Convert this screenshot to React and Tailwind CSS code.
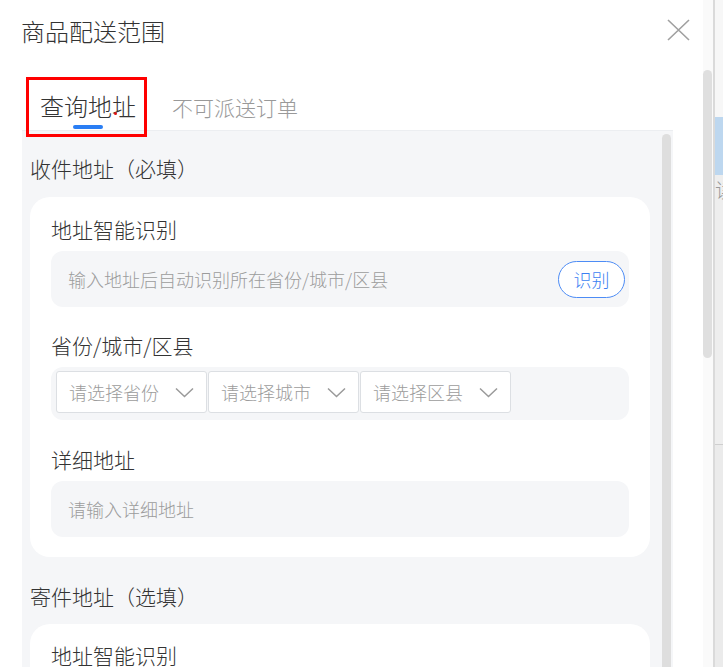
import React from "react";

const font = { fontFamily: '"Noto Sans CJK SC", "Noto Sans", sans-serif' };

function Chevron() {
  return (
    <svg width="19" height="11" viewBox="0 0 19 11" fill="none" className="shrink-0">
      <path d="M1 1.5 L9.5 9.5 L18 1.5" stroke="#9a9a9a" strokeWidth="1.5" />
    </svg>
  );
}

function Select({ label }) {
  return (
    <div className="flex h-[42px] w-[151px] items-center justify-between rounded-[3px] border border-[#dcdfe3] bg-white pl-[12px] pr-[12px]">
      <span className="text-[18px] leading-[24px] text-[#9c9c9c]">{label}</span>
      <Chevron />
    </div>
  );
}

function Label({ children, className = "" }) {
  return <div className={`text-[21px] leading-[28px] text-[#333] ${className}`}>{children}</div>;
}

function AddressCard({ first }) {
  return (
    <div className={`w-[620px] rounded-[20px] bg-white px-[21px] ${first ? "pt-[18px] pb-[20px]" : "pt-[17px] pb-[20px]"}`}>
      <Label>地址智能识别</Label>
      <div className="mt-[8px] flex h-[56px] items-center justify-between rounded-[12px] bg-[#f5f6f8] pl-[17px] pr-[4px]">
        <span className="text-[18px] leading-[24px] text-[#9c9c9c]">输入地址后自动识别所在省份/城市/区县</span>
        <button className="flex h-[37px] w-[67px] items-center justify-center rounded-full border border-[#4d8cf5] bg-white text-[18px] leading-[24px] text-[#3c7ff2]">
          识别
        </button>
      </div>
      {first && (
        <>
          <Label className="mt-[24px]">省份/城市/区县</Label>
          <div className="mt-[8px] flex gap-px rounded-[12px] bg-[#f5f6f8] pl-[5px] pt-[4px] pb-[7px]">
            <Select label="请选择省份" />
            <Select label="请选择城市" />
            <Select label="请选择区县" />
          </div>
          <Label className="mt-[25px]">详细地址</Label>
          <div className="mt-[8px] flex h-[56px] items-center rounded-[12px] bg-[#f5f6f8] pl-[17px]">
            <span className="text-[18px] leading-[24px] text-[#9c9c9c]">请输入详细地址</span>
          </div>
        </>
      )}
    </div>
  );
}

export default function App() {
  return (
    <div className="relative flex h-[667px] w-[723px] overflow-hidden bg-white font-light" style={font}>
      {/* dialog body */}
      <div className="flex w-[703px] flex-col">
        <div className="relative h-[77px] shrink-0">
          <div className="pl-[21px] pt-[15px] text-[24px] leading-[32px] text-[#333]">商品配送范围</div>
          <svg className="absolute left-[667px] top-[19px]" width="23" height="22" viewBox="0 0 23 22" fill="none">
            <path d="M1 1 L22 21 M22 1 L1 21" stroke="#a0a0a0" strokeWidth="1.6" />
          </svg>
        </div>

        {/* tabs */}
        <div className="flex h-[53px] shrink-0 items-start pl-[40px]">
          <div className="flex flex-col items-center pt-[13px]">
            <span className="text-[24px] leading-[32px] text-[#333]">查询地址</span>
            <span className="mt-[3px] h-[4px] w-[30px] rounded-full bg-[#2a7ef4]" />
          </div>
          <div className="ml-[36px] pt-[16px] text-[21px] leading-[28px] text-[#999]">不可派送订单</div>
        </div>

        {/* scrolling panel */}
        <div className="ml-[22px] flex min-h-0 w-[651px] flex-1 border-t border-[#eceef1] bg-[#f5f6f8]">
          <div className="flex w-[640px] flex-col pl-[8px]">
            <Label className="pt-[23px]">收件地址（必填）</Label>
            <div className="mt-[15px]">
              <AddressCard first />
            </div>
            <Label className="mt-[25px]">寄件地址（选填）</Label>
            <div className="mt-[14px]">
              <AddressCard />
            </div>
          </div>
          <div className="w-[9px] pt-[3px]">
            <div className="h-[600px] w-[9px] rounded-full bg-[#dedede]" />
          </div>
        </div>
      </div>

      {/* dialog scrollbar */}
      <div className="w-[10px] bg-[#fafafa] pt-[70px]">
        <div className="h-[288px] w-[9px] rounded-full bg-[#dfdfdf]" />
      </div>
      <div className="w-[2px] bg-[#dadada]" />

      {/* page behind the dialog */}
      <div className="flex w-[8px] flex-col overflow-hidden bg-[#eeeeee]">
        <div className="h-[117px] shrink-0 bg-[#f7f7f7]" />
        <div className="h-[58px] shrink-0 bg-[#bdd7ef]" />
        <div className="h-[269px] shrink-0 overflow-hidden whitespace-nowrap pt-[3px] text-[20px] leading-[24px] text-[#999]">读</div>
        <div className="h-px shrink-0 bg-[#cfcfcf]" />
        <div className="flex-1 bg-[#ebebeb]" />
      </div>

      {/* red highlight frame around the active tab */}
      <div className="pointer-events-none absolute left-[26px] top-[77px] h-[60px] w-[121px] border-[3px] border-[#ff0000]" />
      <div className="pointer-events-none absolute left-[114px] top-[112px] h-[3px] w-[3px] rounded-full bg-[#e01010]" />
    </div>
  );
}
